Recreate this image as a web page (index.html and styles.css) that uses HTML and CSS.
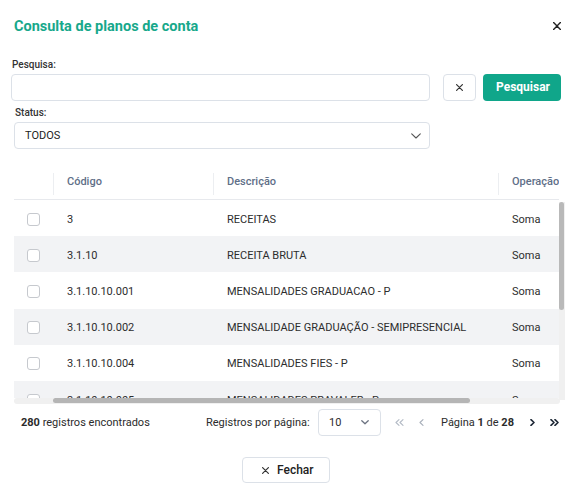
FILE: index.html
```html
<!DOCTYPE html>
<html lang="pt-BR">
<head>
<meta charset="utf-8">
<title>Consulta de planos de conta</title>
<link rel="stylesheet" href="styles.css">
</head>
<body>
<div class="modal">
  <header class="head">
    <h1 class="title">Consulta de planos de conta</h1>
    <button class="close" aria-label="Fechar">
      <svg width="8" height="8" viewBox="0 0 8 8"><path d="M0.6 0.6L7.4 7.4M7.4 0.6L0.6 7.4" stroke="#222" stroke-width="1.4" stroke-linecap="round"/></svg>
    </button>
  </header>

  <label class="lbl lbl-search">Pesquisa:</label>
  <div class="search-row">
    <input class="input" type="text">
    <button class="btn-clear" aria-label="Limpar">
      <svg width="7" height="7" viewBox="0 0 7 7"><path d="M0.6 0.6L6.4 6.4M6.4 0.6L0.6 6.4" stroke="#333" stroke-width="1.2" stroke-linecap="round"/></svg>
    </button>
    <button class="btn-primary">Pesquisar</button>
  </div>

  <label class="lbl lbl-status">Status:</label>
  <div class="select">
    <span>TODOS</span>
    <svg width="10" height="6" viewBox="0 0 10 6"><path d="M0.7 0.8L5 5L9.3 0.8" fill="none" stroke="#555" stroke-width="1.1" stroke-linecap="round" stroke-linejoin="round"/></svg>
  </div>

  <div class="grid">
    <div class="grid-head">
      <div class="th"></div>
      <div class="th"><span class="th-in">Código</span></div>
      <div class="th"><span class="th-in">Descrição</span></div>
      <div class="th"><span class="th-in">Operação</span></div>
    </div>
    <div class="grid-main">
      <div class="grid-body">
        <div class="row"><div class="cell cb"><span class="check"></span></div><div class="cell">3</div><div class="cell">RECEITAS</div><div class="cell">Soma</div></div>
        <div class="row alt"><div class="cell cb"><span class="check"></span></div><div class="cell">3.1.10</div><div class="cell">RECEITA BRUTA</div><div class="cell">Soma</div></div>
        <div class="row"><div class="cell cb"><span class="check"></span></div><div class="cell">3.1.10.10.001</div><div class="cell">MENSALIDADES GRADUACAO - P</div><div class="cell">Soma</div></div>
        <div class="row alt"><div class="cell cb"><span class="check"></span></div><div class="cell">3.1.10.10.002</div><div class="cell">MENSALIDADE GRADUAÇÃO - SEMIPRESENCIAL</div><div class="cell">Soma</div></div>
        <div class="row"><div class="cell cb"><span class="check"></span></div><div class="cell">3.1.10.10.004</div><div class="cell">MENSALIDADES FIES - P</div><div class="cell">Soma</div></div>
        <div class="row alt"><div class="cell cb"><span class="check"></span></div><div class="cell">3.1.10.10.005</div><div class="cell">MENSALIDADES PRAVALER - P</div><div class="cell">Soma</div></div>
      </div>
      <div class="vscroll"><div class="vthumb"></div></div>
    </div>
    <div class="hscroll"><div class="hthumb"></div></div>
  </div>

  <div class="footer">
    <div class="count"><b>280</b> registros encontrados</div>
    <div class="pp-label">Registros por página:</div>
    <div class="pp-select">
      <span>10</span>
      <svg width="8" height="5" viewBox="0 0 8 5"><path d="M0.8 0.8L4 3.8L7.2 0.8" fill="none" stroke="#6b7280" stroke-width="1.3" stroke-linecap="round" stroke-linejoin="round"/></svg>
    </div>
    <div class="pager">
      <svg class="pg-first" width="9" height="7" viewBox="0 0 9 7"><path d="M4 0.6L1 3.5L4 6.4M8 0.6L5 3.5L8 6.4" fill="none" stroke="#b3bac5" stroke-width="1.1" stroke-linecap="round" stroke-linejoin="round"/></svg>
      <svg class="pg-prev" width="5" height="7" viewBox="0 0 5 7"><path d="M4 0.6L1 3.5L4 6.4" fill="none" stroke="#a8afba" stroke-width="1.1" stroke-linecap="round" stroke-linejoin="round"/></svg>
      <span class="pg-text">Página <b>1</b> de <b>28</b></span>
      <svg class="pg-next" width="5" height="7" viewBox="0 0 5 7"><path d="M1 0.6L4 3.5L1 6.4" fill="none" stroke="#1f2937" stroke-width="1.6" stroke-linecap="round" stroke-linejoin="round"/></svg>
      <svg class="pg-last" width="9" height="7" viewBox="0 0 9 7"><path d="M1 0.6L4 3.5L1 6.4M5 0.6L8 3.5L5 6.4" fill="none" stroke="#1f2937" stroke-width="1.6" stroke-linecap="round" stroke-linejoin="round"/></svg>
    </div>
  </div>

  <div class="actions">
    <button class="btn-close">
      <svg width="7" height="7" viewBox="0 0 7 7"><path d="M0.6 0.6L6.4 6.4M6.4 0.6L0.6 6.4" stroke="#333" stroke-width="1.2" stroke-linecap="round"/></svg>
      <span>Fechar</span>
    </button>
  </div>
</div>
</body>
</html>
```

FILE: styles.css
```css
* { box-sizing: border-box; }

body {
  margin: 0;
  background: #ffffff;
  font-family: Roboto, "Noto Sans", "Liberation Sans", sans-serif;
  color: #2b2b2b;
}

.modal {
  width: 580px;
  height: 498px;
  padding-top: 17px;
  overflow: hidden;
}

.head {
  display: flex;
  justify-content: space-between;
  align-items: flex-start;
  padding: 0 19px 0 14px;
  height: 20px;
}

.title {
  margin: 0;
  font-size: 14.5px;
  line-height: 20px;
  font-weight: 700;
  color: #17a88b;
}

.close {
  margin-top: 5px;
  padding: 0;
  border: 0;
  background: none;
  width: 8px;
  height: 8px;
  display: flex;
}

.lbl {
  display: block;
  font-size: 10px;
  line-height: 12px;
  font-weight: 500;
  color: #333;
}

.lbl-search {
  margin: 21.5px 0 3px 12px;
}

.search-row {
  display: flex;
  margin-left: 11px;
  height: 27px;
}

.input {
  width: 419px;
  height: 27px;
  border: 1px solid #dce1e8;
  border-radius: 4px;
  outline: none;
  margin: 0;
}

.btn-clear {
  margin-left: 13px;
  width: 33px;
  height: 27px;
  border: 1px solid #dce1e8;
  border-radius: 4px;
  background: #fff;
  display: flex;
  align-items: center;
  justify-content: center;
  padding: 0;
}

.btn-primary {
  margin-left: 7px;
  width: 78px;
  height: 27px;
  border: 0;
  border-radius: 4px;
  background: #10a68a;
  color: #fff;
  font-family: inherit;
  font-size: 12px;
  font-weight: 700;
  padding: 0 0 0 2px;
}

.lbl-status {
  margin: 6px 0 3.5px 15px;
}

.select {
  margin-left: 14px;
  width: 416px;
  height: 27px;
  border: 1px solid #dce1e8;
  border-radius: 4px;
  display: flex;
  align-items: center;
  justify-content: space-between;
  padding: 0 8px 0 10px;
  font-size: 11px;
  color: #222;
}

.grid {
  margin: 16px 0 0 14px;
  width: 551px;
}

.grid-head {
  display: grid;
  grid-template-columns: 39px 160px 285px 61px;
  height: 35px;
  width: 545px;
  border-bottom: 1px solid #e7e9ed;
}

.th {
  padding-top: 8px;
  overflow: hidden;
}

.th-in {
  display: block;
  height: 22px;
  border-left: 1px solid #eceef1;
  padding: 2px 0 0 13px;
  font-size: 11px;
  line-height: 13px;
  font-weight: 500;
  color: #5f6f88;
  white-space: nowrap;
}

.grid-main {
  display: flex;
  height: 198px;
}

.grid-body {
  width: 545px;
  height: 198px;
  overflow: hidden;
}

.row {
  display: grid;
  grid-template-columns: 39px 160px 285px 61px;
  height: 36.2px;
  padding-top: 2px;
  background: #fff;
}

.row.alt {
  background: #f2f3f5;
}

.cell {
  display: flex;
  align-items: center;
  padding-left: 14px;
  font-size: 11px;
  color: #2d2d2d;
  white-space: nowrap;
  overflow: hidden;
}

.cell.cb {
  padding-left: 13px;
}

.check {
  width: 13px;
  height: 13px;
  border: 1px solid #c6c9ce;
  border-radius: 3px;
  background: #fff;
}

.vscroll {
  width: 6px;
  height: 198px;
  margin-top: 2px;
  background: #f0f0f0;
}

.vthumb {
  width: 5px;
  height: 108px;
  border-radius: 3px;
  background: #b9b9b9;
}

.hscroll {
  width: 546px;
  height: 6px;
  background: #f0f0f0;
  border-radius: 3px;
  display: flex;
}

.hthumb {
  margin-left: 39px;
  width: 417px;
  height: 5px;
  border-radius: 3px;
  background: #b5b5b5;
}

.footer {
  margin-top: 5px;
  height: 27px;
  display: flex;
  align-items: center;
  padding-left: 21px;
  font-size: 11px;
  color: #2b2b2b;
}

.count {
  width: 185px;
}

.count b {
  font-weight: 700;
}

.pp-label {
  width: 105px;
}

.pp-select {
  margin-left: 7px;
  width: 63px;
  height: 27px;
  border: 1px solid #dce1e8;
  border-radius: 4px;
  display: flex;
  align-items: center;
  justify-content: space-between;
  padding: 0 11px 0 10px;
}

.pager {
  display: flex;
  align-items: center;
  margin-left: 14px;
}

.pg-prev { margin-left: 15px; }
.pg-text { margin-left: 17px; white-space: nowrap; }
.pg-text b { font-weight: 700; }
.pg-next { margin-left: 16px; }
.pg-last { margin-left: 15px; }

.actions {
  margin-top: 21px;
  display: flex;
  padding-left: 242px;
}

.btn-close {
  width: 88px;
  height: 26px;
  border: 1px solid #dce1e8;
  border-radius: 4px;
  background: #fff;
  display: flex;
  align-items: center;
  padding: 0 0 0 19px;
  font-family: inherit;
  font-size: 12px;
  font-weight: 500;
  color: #222;
}

.btn-close span {
  margin-left: 8px;
}
```
